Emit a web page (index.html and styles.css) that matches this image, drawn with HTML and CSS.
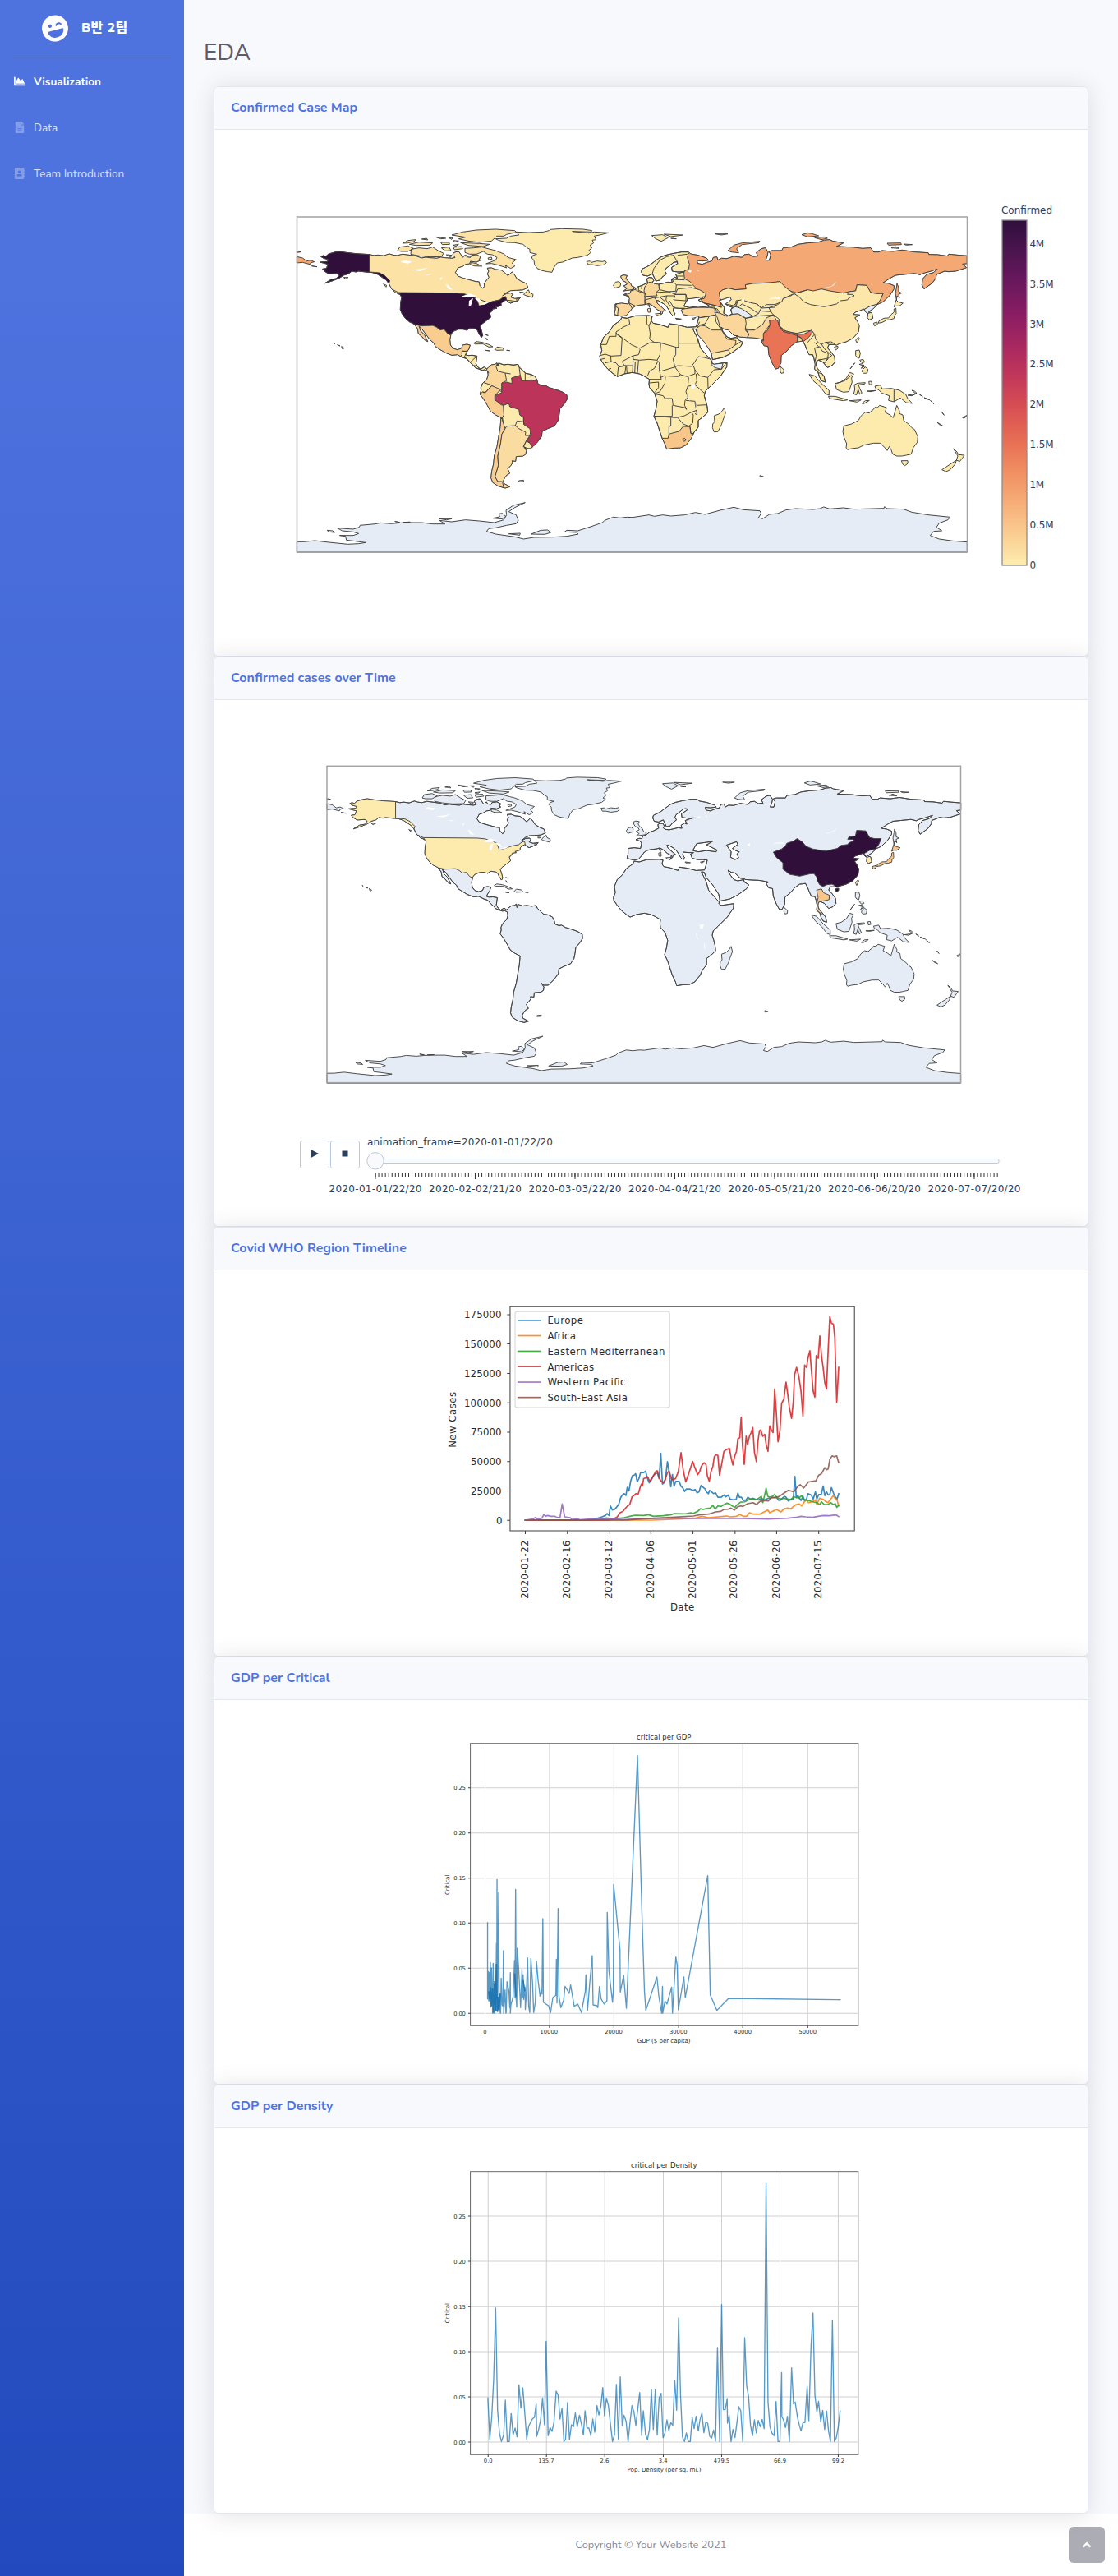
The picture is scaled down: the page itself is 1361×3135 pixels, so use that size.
FILE: index.html
```html
<!DOCTYPE html>
<html lang="ko">
<head>
<meta charset="utf-8">
<title>EDA</title>
<link rel="stylesheet" href="styles.css">
</head>
<body>
<div class="wrapper">
  <nav class="sidebar">
    <a class="brand">
      <svg class="brand-icon" viewBox="0 0 496 512"><path d="M248 8C111 8 0 119 0 256s111 248 248 248 248-111 248-248S385 8 248 8zm20.100 198.100c4-25.200 34.200-42.100 59.900-42.100s55.900 16.900 59.900 42.100c1.700 11.100-11.400 18.300-19.800 10.800l-9.500-8.500c-14.800-13.200-46.200-13.200-61 0L288 217c-8.400 7.400-21.600.3-19.900-10.900zM168 160c17.700 0 32 14.300 32 32s-14.300 32-32 32-32-14.300-32-32 14.300-32 32-32zm230.900 146C390 377 329.400 432 256 432h-16c-73.400 0-134-55-142.900-126-1.200-9.500 6.300-18 15.900-18h270c9.600 0 17.100 8.400 15.900 18z"/></svg>
      <span class="brand-text">B반 2팀</span>
    </a>
    <hr class="divider">
    <a class="nav-link active"><svg class="nav-icon" viewBox="0 0 512 512"><path d="M500 384c6.600 0 12 5.400 12 12v40c0 6.600-5.400 12-12 12H12c-6.600 0-12-5.400-12-12V76c0-6.600 5.400-12 12-12h40c6.600 0 12 5.400 12 12v308h436zM372.700 159.500L288 216l-85.300-113.700c-5.100-6.800-15.500-6.300-19.900 1L96 248v104h384l-89.900-187.800c-3.200-6.500-11.400-8.700-17.400-4.700z"/></svg><span>Visualization</span></a>
    <a class="nav-link"><svg class="nav-icon" viewBox="-64 0 512 512"><path d="M224 136V0H24C10.700 0 0 10.700 0 24v464c0 13.300 10.700 24 24 24h336c13.300 0 24-10.700 24-24V160H248c-13.200 0-24-10.800-24-24zm64 236c0 6.600-5.400 12-12 12H108c-6.600 0-12-5.400-12-12v-8c0-6.600 5.400-12 12-12h168c6.600 0 12 5.400 12 12v8zm0-64c0 6.600-5.400 12-12 12H108c-6.600 0-12-5.400-12-12v-8c0-6.600 5.400-12 12-12h168c6.600 0 12 5.400 12 12v8zm0-72v8c0 6.600-5.400 12-12 12H108c-6.600 0-12-5.400-12-12v-8c0-6.600 5.400-12 12-12h168c6.600 0 12 5.400 12 12zm96-114.100v6.100H256V0h6.100c6.400 0 12.500 2.500 17 7l97.900 98c4.500 4.500 7 10.600 7 16.900z"/></svg><span>Data</span></a>
    <a class="nav-link"><svg class="nav-icon" viewBox="-32 0 512 512"><path d="M436 160c6.600 0 12-5.400 12-12v-40c0-6.600-5.400-12-12-12h-20V48c0-26.500-21.500-48-48-48H48C21.500 0 0 21.500 0 48v416c0 26.500 21.500 48 48 48h320c26.500 0 48-21.500 48-48v-48h20c6.600 0 12-5.400 12-12v-40c0-6.600-5.400-12-12-12h-20v-64h20c6.600 0 12-5.400 12-12v-40c0-6.600-5.400-12-12-12h-20v-64h20zm-228-32c35.300 0 64 28.700 64 64s-28.700 64-64 64-64-28.700-64-64 28.700-64 64-64zm112 236.800c0 10.600-10 19.200-22.400 19.200H118.400C106 384 96 375.400 96 364.800v-19.200c0-31.800 30.100-57.600 67.200-57.600h5c12.300 5.100 25.700 8 39.800 8s27.600-2.900 39.800-8h5c37.100 0 67.200 25.800 67.200 57.600v19.200z"/></svg><span>Team Introduction</span></a>
  </nav>
  <div class="content">
    <main class="main">
      <h1>EDA</h1>
      <section class="card tall">
        <h6 class="card-header">Confirmed Case Map</h6>
        <svg class="chart plotly" viewBox="261 158 1063 640">
          <defs>
            <linearGradient id="matter" x1="0" y1="1" x2="0" y2="0">
              <stop offset="0" stop-color="rgb(253,237,176)"/><stop offset=".091" stop-color="rgb(250,205,145)"/><stop offset=".182" stop-color="rgb(246,173,119)"/><stop offset=".273" stop-color="rgb(240,142,98)"/><stop offset=".364" stop-color="rgb(231,109,84)"/><stop offset=".455" stop-color="rgb(216,80,83)"/><stop offset=".545" stop-color="rgb(195,56,90)"/><stop offset=".636" stop-color="rgb(168,40,96)"/><stop offset=".727" stop-color="rgb(138,29,99)"/><stop offset=".818" stop-color="rgb(107,24,93)"/><stop offset=".909" stop-color="rgb(76,21,80)"/><stop offset="1" stop-color="rgb(47,15,61)"/>
            </linearGradient>
            <!-- Americas mainland -->
            <path id="west" d="M122 187L130 183 140 186 150 177 165 173 175 170 190 168 215 172 250 176 299 179 315 183 330 181 352 184 362 180 372 177 385 181 400 183 420 178 450 182 470 185 490 192 505 189 520 191 545 193 560 189 575 191 600 193 612 190 603 180 607 173 615 170 625 168 632 178 640 190 650 180 655 188 668 190 672 182 690 180 705 187 700 197 705 200 690 207 668 204 665 213 650 215 640 222 622 228 613 245 622 258 640 265 665 272 688 278 700 279 702 292 712 303 720 296 718 285 728 272 736 262 730 250 735 240 730 229 745 228 760 234 780 236 790 243 805 257 820 243 830 255 838 268 855 278 872 285 878 300 860 308 835 310 815 311 800 318 785 330 800 322 815 320 822 325 815 335 830 340 850 338 840 347 815 357 805 352 798 345 788 350 780 358 780 366 760 372 765 376 750 378 745 388 738 392 743 408 730 418 710 433 703 441 708 455 713 475 708 482 700 470 693 455 685 450 665 448 655 456 640 452 625 452 605 460 597 470 593 490 595 510 605 522 620 527 635 522 640 510 655 507 667 510 662 525 655 535 650 545 660 548 675 547 692 550 690 565 688 578 695 590 705 598 718 590 728 597 735 590 745 582 758 580 765 575 768 588 771 575 778 578 790 582 805 580 825 583 842 580 846 590 858 602 870 613 890 617 905 625 912 640 915 652 930 658 940 656 955 665 985 674 1005 682 1020 692 1021 708 1010 725 995 742 992 765 988 785 975 805 950 815 930 825 928 843 912 865 897 880 888 888 870 888 862 880 872 895 870 908 860 915 835 917 833 934 820 932 822 940 815 950 804 962 812 978 800 985 793 995 788 1005 790 1015 812 1027 795 1032 770 1025 750 1012 743 995 746 970 752 945 755 915 765 880 770 850 777 810 780 775 760 765 742 752 730 730 715 705 703 690 707 675 706 665 712 650 728 635 733 618 730 605 720 600 712 602 700 598 685 592 680 585 668 575 655 560 640 555 620 545 600 547 575 537 555 525 540 515 535 503 520 490 505 470 490 450 480 440 486 458 500 472 512 497 502 492 490 478 478 468 475 450 462 433 445 425 430 412 418 395 412 380 413 355 417 335 410 325 395 318 380 305 370 285 360 272 345 262 330 252 310 245 285 243 260 240 250 243 235 240 222 250 205 255 190 265 165 275 137 284 160 270 178 267 190 255 180 248 150 250 135 240 128 232 142 230 148 215 130 210 118 207 145 205 150 198 132 193Z"/>
            <!-- Eurasia and Africa, with the Black and Caspian seas cut out -->
            <path id="east" d="M-63 360L-40 357-15 360-11 340-16 332-33 326-20 321-10 322-6 312 5 309 20 297 35 292 45 287 55 282 52 268 60 263 72 264 78 275 72 280 80 286 95 288 110 285 130 280 145 282 142 270 155 262 164 266 158 252 175 246 190 242 165 243 145 240 143 226 165 212 162 206 150 208 138 218 122 230 118 240 124 250 108 262 100 273 85 276 80 265 73 250 55 258 38 255 32 242 35 232 60 220 80 205 100 190 120 182 150 175 180 170 205 170 212 177 240 182 270 192 278 200 255 203 235 201 238 212 255 215 272 208 290 203 295 190 308 188 312 200 325 193 345 194 370 186 400 190 408 180 425 178 440 187 458 185 452 172 470 158 485 155 495 170 492 185 486 200 500 200 505 180 498 168 510 165 545 165 550 155 580 152 605 142 640 137 680 134 700 127 720 125 730 130 770 137 745 150 800 152 840 157 870 155 880 170 900 170 910 165 950 168 985 163 1030 170 1080 173 1082 179 1115 180 1150 185 1155 178 1185 181 1222 184 1222 212 1205 214 1220 227 1180 240 1155 242 1140 240 1110 252 1108 265 1095 283 1065 305 1057 290 1060 268 1075 252 1100 245 1113 232 1090 240 1060 248 1050 253 1030 248 990 252 960 255 940 266 915 282 935 285 955 293 955 305 940 328 915 352 893 362 885 372 878 378 862 388 874 393 878 412 865 418 858 410 860 395 850 388 845 378 828 385 813 390 806 398 830 400 812 410 822 425 828 440 825 462 805 485 780 498 755 505 745 510 735 508 718 508 712 520 725 535 738 552 740 572 728 585 712 592 695 572 680 565 672 568 670 582 675 595 690 612 700 625 704 645 690 640 682 625 678 610 665 598 667 580 663 560 658 545 645 545 638 530 630 510 622 495 610 497 600 498 580 512 565 530 543 548 542 575 532 595 522 597 510 575 498 545 495 515 480 512 470 495 480 490 455 485 440 483 415 482 390 480 383 476 370 475 350 455 335 452 323 444 330 460 345 480 360 485 378 482 382 474 386 490 403 500 395 515 360 540 330 555 292 563 287 537 263 500 239 473 231 452 220 450 239 489 248 521 276 553 290 568 287 572 297 580 345 573 344 590 320 625 285 660 266 678 262 695 268 715 273 735 275 755 260 770 240 785 240 810 225 828 215 850 195 875 175 885 150 886 125 890 120 875 108 850 98 820 90 795 78 770 85 745 90 715 80 685 62 665 60 650 62 635 40 622 25 615 0 610-30 615-55 625-70 615-90 598-105 580-118 560-120 550-112 530-116 508-105 480-85 462-70 438-45 420-39 409-20 412 10 403 60 402 72 405 68 420 75 430 100 435 130 445 135 432 165 436 200 445 232 443 238 425 243 405 225 403 205 403 185 398 178 382 190 376 170 376 150 374 148 385 155 395 150 405 140 395 132 380 125 370 115 360 95 348 87 347 90 357 110 375 122 385 112 384 108 396 101 398 105 388 90 380 72 365 60 358 45 362 25 364 10 368 0 374-8 385-22 401-40 405-60 400-67 398-63 380ZM187 368L202 341 220 339 263 333 240 346 280 366 277 373 240 368 208 373ZM317 347L356 334 361 344 340 360 352 368 366 373 358 381 364 396 350 403 333 394 335 373Z"/>
            <clipPath id="westClip"><use href="#west"/></clipPath>
            <clipPath id="eastClip"><use href="#east"/></clipPath>
            <path id="antarctica" d="M34 1228L60 1228 100 1224 150 1230 220 1237 260 1235 285 1231 240 1225 215 1222 212 1208 190 1205 240 1205 260 1198 240 1192 200 1188 182 1178 240 1182 262 1175 265 1168 320 1163 340 1159 380 1162 410 1159 450 1158 490 1158 530 1163 575 1163 555 1150 600 1155 650 1148 700 1152 755 1158 790 1148 800 1130 798 1113 825 1095 868 1085 830 1103 808 1118 835 1130 843 1150 835 1162 800 1168 760 1177 735 1180 727 1190 760 1200 830 1210 862 1218 900 1212 970 1211 1020 1208 1062 1200 1055 1194 1012 1192 1020 1186 1060 1188 1110 1172 1150 1158 1158 1150 1190 1138 1215 1141 1240 1138 1260 1139 1320 1130 1340 1135 1370 1130 1400 1134 1450 1130 1490 1121 1525 1128 1580 1113 1630 1102 1665 1111 1725 1115 1730 1125 1720 1140 1735 1144 1760 1128 1790 1125 1820 1112 1855 1107 1920 1110 1945 1107 1958 1101 1980 1108 2030 1104 2070 1109 2178 1106 2180 1100 2190 1107 2250 1109 2280 1120 2340 1130 2420 1138 2412 1148 2380 1160 2370 1175 2390 1188 2360 1190 2347 1205 2380 1218 2430 1225 2482 1229 2482 1266 34 1266ZM750 1142L775 1137 772 1126 785 1124 797 1135 785 1145ZM890 1200L925 1186 950 1185 962 1194 940 1201ZM808 1199L850 1197 848 1204ZM145 1186L165 1188 172 1194 150 1192ZM555 1144L600 1144 580 1148ZM392 1154L410 1157ZM422 1157L448 1156Z"/>
            <path id="arctic" d="M600 108L640 97 690 90 760 87 830 92 836 98 800 106 790 112 765 112 745 130 700 135 660 130 625 122 650 116ZM632 136L700 139 738 142 715 150 660 146ZM648 157L680 155 710 152 740 160 760 165 790 177 805 190 835 198 820 210 830 222 815 230 795 218 800 228 770 218 745 212 725 213 760 200 765 190 748 180 730 178 715 168 690 178 665 178 648 172ZM452 160L480 155 510 158 530 152 550 165 570 175 562 187 520 188 480 184 450 178ZM402 165L410 152 440 148 460 157 440 168 415 168ZM422 138L440 128 468 125 462 132 440 137ZM445 142L480 134 530 137 520 145 470 146ZM490 123L508 120 512 126ZM540 115L578 120 560 122ZM560 135L590 135 592 142 565 143ZM562 155L590 152 597 165 575 166ZM588 118L603 118 600 124ZM605 128L625 130 610 134ZM605 153L635 150 640 158 610 162ZM580 180L600 182 595 190ZM605 145L625 142 615 149ZM670 208L690 212 710 222 682 221 668 216ZM732 192L745 189 747 196 735 198ZM865 322L880 308 884 318 897 325 895 336 870 329 862 325ZM848 316L862 318 850 320ZM385 308L405 318 412 325 392 317ZM350 287L362 292 360 298ZM840 352L848 338 836 342Z"/>
            <path id="greenland" d="M760 122L800 120 815 112 845 108 835 97 880 99 935 97 955 92 960 88 1000 85 1080 87 1112 92 1108 97 1040 95 1100 101 1120 97 1172 100 1140 108 1120 112 1127 125 1113 127 1118 137 1105 145 1112 155 1100 165 1110 170 1095 182 1060 190 1040 192 1005 207 985 210 972 228 966 244 950 242 930 238 912 230 902 215 900 200 892 192 895 183 910 178 885 172 885 160 875 155 860 142 830 136 800 135 770 127Z"/>
            <path id="caribbean" d="M680 503L690 497 712 500 735 508 750 516 735 517 715 506 685 506ZM757 526L765 517 785 520 792 528 765 529ZM724 529L738 531ZM800 529L812 530ZM724 472L733 475ZM725 484L730 492ZM170 503L174 505ZM182 509L192 513ZM197 515L207 521 201 525ZM845 1005L862 1003 862 1008 845 1009ZM1092 205L1105 203 1110 208 1130 203 1150 205 1160 202 1165 209 1155 217 1130 220 1112 216 1098 216ZM205 263L222 263 212 268ZM88 221L108 224Z"/>
            <path id="chukotka" d="M34 187L55 192 70 203 85 200 98 206 85 209 82 215 55 208 34 210ZM34 167L48 170 34 172Z"/>
            <path id="ruIsles" d="M348 165L370 145 400 137 465 131 462 136 400 143 380 158 388 173 360 170ZM618 107L640 100 655 103 680 111 640 115ZM665 118L700 115 712 120 690 125ZM930 138L980 137 982 143 935 145ZM990 141L1022 143 1000 145ZM945 155L960 150 975 157ZM302 104L348 104 325 108ZM966 285L972 300 972 315 983 320 972 325 975 338 966 330 964 345 960 320 964 300Z"/>
            <path id="isles" d="M70 110L110 107 130 118 105 131 85 122ZM115 105L185 108 140 114ZM140 120L160 122ZM-43 258L-33 254-20 256-24 266-18 275-8 283-3 295 8 299 3 307-32 312-20 303-32 294-20 288-24 280-35 275-40 268ZM-70 292L-62 280-50 278-43 284-45 296-64 302ZM55 378L64 375 65 390 57 390ZM56 362L62 362 62 372ZM83 396L103 394 100 404 88 400ZM157 412L178 415 160 416ZM216 413L232 409 222 417ZM335 738L340 758 330 785 325 800 312 826 298 827 292 812 293 798 300 790 298 768 315 762 328 750ZM540 588L553 600 552 611 543 613 539 605ZM465 986L478 990 466 992ZM737 517L750 514 750 522 742 528ZM815 530L828 528 832 540 828 558 820 555 815 548ZM840 600L850 590 860 598 857 612 845 613 838 607ZM830 565L842 562 848 572 838 575ZM828 580L840 578 848 588 835 595 842 585ZM795 597L812 575ZM740 650L760 645 780 632 793 610 808 615 800 630 802 645 790 680 770 682 745 672ZM645 617L665 622 690 650 718 675 718 693 705 688 685 662 660 640ZM715 697L740 697 785 710 770 713 720 705ZM792 713L835 710 820 718ZM838 723L850 713 865 712 845 724ZM810 655L822 649 850 647 848 652 825 655 830 668 838 685 830 690 824 672 818 692 808 688 812 672ZM863 643L872 642 875 653 865 655ZM855 678L888 676 870 680ZM885 660L905 656 912 670 945 668 975 675 998 690 1005 705 1022 723 1000 720 978 703 955 717 935 712 938 695 910 685 900 674 888 668ZM1005 693L1025 690 1038 685 1030 678 1020 675 1035 688 1020 695ZM1048 690L1060 698ZM1065 702L1085 710ZM1088 712L1100 725ZM1130 755L1138 766ZM1113 792L1133 805 1120 800ZM1205 775L1222 766 1212 778ZM965 730L975 750 975 760 987 765 990 785 1010 800 1020 812 1030 818 1042 845 1040 865 1025 885 1018 908 1000 912 985 915 965 915 950 908 945 893 938 880 930 895 922 885 905 868 880 868 845 875 825 885 800 888 785 892 780 885 782 870 772 845 768 825 772 805 800 798 825 785 835 768 850 755 865 758 870 752 880 745 885 737 895 738 902 730 928 738 922 755 940 765 952 775 958 755ZM982 932L1005 932 1006 942 995 950 987 945ZM1172 888L1185 900 1190 910 1212 912 1205 922 1195 935 1183 930 1188 915ZM1183 930L1178 945 1160 965 1145 972 1130 965 1145 955 1165 942Z"/>
            <path id="japan" d="M955 371L963 345 970 352 988 357 975 367 962 367ZM900 422L918 412 935 411 945 398 955 390 955 378 962 375 963 395 957 402 955 413 942 417 930 418 912 427 898 430ZM880 430L893 426 895 434 884 440Z"/>
            <path id="taiwan" d="M815 492L825 481 828 485 820 503Z"/>
            <path id="usa" d="M380 318L615 320 645 323 668 330 690 340 700 367 735 355 750 350 775 345 787 335 797 333 800 345 840 400 740 500 700 500 690 470 640 480 598 475 585 468 572 452 557 455 545 445 530 438 490 440 465 435 400 440ZM60 150L299 150 299 243 335 246 355 256 374 275 370 285 330 262 200 300 60 300Z"/>
            <path id="china" d="M498 374L515 368 530 362 545 350 550 340 575 332 590 322 610 335 625 352 650 362 700 370 745 360 760 348 785 345 790 338 810 330 805 325 785 325 790 315 815 312 820 290 855 292 870 318 890 322 915 322 905 345 893 362 868 368 848 380 860 395 860 520 740 520 735 503 725 498 705 500 690 507 677 500 668 485 665 470 655 457 640 458 600 467 560 460 545 447 535 440 535 415 510 395Z"/>
            <path id="thailand" d="M665 521L684 516 692 531 715 541 713 558 689 563 680 563 673 579 675 595 692 610 684 613 660 595 671 550Z"/>
            <path id="skorea" d="M855 396L874 390 884 400 884 422 855 422Z"/>
            <g id="lakes" fill="#fff">
              <path d="M412 207L425 200 455 205 440 212ZM455 235L490 232 515 226 485 240ZM500 253L530 250 515 254ZM555 268L568 260 560 272ZM575 286L585 295 582 285 603 308 588 305ZM635 332L665 322 690 330 675 335 650 336ZM662 367L663 348 678 338 670 365ZM683 338L700 340 713 355 698 352ZM697 364L720 355 740 352 720 362ZM783 758L790 768 784 762Z"/>
              <path d="M1460 240L1478 235 1472 245ZM1492 230L1504 238 1500 240ZM1963 300Q1995 298 2003 276Q2003 296 1963 303ZM1655 345L1668 340 1668 352ZM1758 345L1765 338 1798 336 1798 341 1768 341ZM1473 655L1490 652 1485 670 1475 668ZM1458 685L1470 713 1462 708ZM1490 720L1496 750 1491 745ZM1340 253L1352 250 1350 256Z"/>
            </g>
          </defs>
          <g class="map" transform="translate(350 250) scale(.33333)">
            <use href="#antarctica" class="void"/>
            <use href="#west" class="low"/>
            <g clip-path="url(#westClip)">
              <path class="c2" d="M299 150H900V360L797 345 797 333 775 345 735 355 690 340 615 320H380L299 250Z"/>
              <path class="c5" d="M400 435L690 440 700 500 668 520 655 533 637 532 637 545 628 555 500 560Z"/>
              <use href="#usa" class="top"/>
              <path class="c4" d="M730 560L770 562 762 590 768 605 795 612 800 640 783 648 783 680 770 675 750 660 742 655 720 648 700 640 735 610 728 602Z"/>
              <path class="c5" d="M700 690L712 682 722 684 745 658 778 672 757 695 760 710 780 728 788 730 790 765 783 778 740 790 690 720ZM740 780L783 776 788 795 795 815 783 835 778 870 768 915 770 950 758 990 768 1008 790 1010 795 1040 720 1035Z"/>
              <path class="c3" d="M795 815L800 806 832 804 845 815 870 828 868 840 885 840 872 860 862 880 900 900 900 1040 791 1040 785 1008 768 1008 758 990 770 950 768 915 778 870 783 835Z"/>
              <path class="brazil" d="M783 648L800 645 820 650 818 630 850 620 855 640 870 640 890 637 905 640 912 620 1060 650 1060 800 900 890 885 868 872 860 890 838 885 815 863 800 862 775 848 765 845 745 812 735 808 722 790 730 775 722 757 710 757 695 782 684Z"/>
              <path class="edge" d="M788 795L785 775M862 775V790L838 787 832 804M864 800L862 790M885 840L888 825M868 608L868 640M888 612L890 637M846 590L850 622M795 612L815 615M712 680L722 683 745 660M637 532H655M650 545L645 555 655 560M668 572L690 552M680 585H690M703 600V592M862 880L872 860 885 865"/>
            </g>
            <use href="#west" class="edge"/>
            <use href="#arctic" class="c2"/><use href="#greenland" class="low"/><use href="#caribbean" class="low"/><use href="#chukotka" class="russia"/>
            <g transform="translate(1260 0)">
              <use href="#east" class="low"/>
              <g clip-path="url(#eastClip)">
                <path class="russia" d="M203 178L212 168 240 100H1222V330L940 400 893 362 905 345 915 322 890 322 870 318 855 292 820 290 815 312 790 315 770 320 720 312 690 305 660 312 640 308 600 320 575 312 560 300 545 290 538 278 510 283 490 283 440 285 412 290 415 305 375 308 350 302 330 308 316 318 330 330 320 345 325 372 300 365 265 357 250 345 268 322 240 310 220 290 210 278 190 268 188 250 188 240 205 232 208 215 200 190Z"/>
                <use href="#china" class="c1"/>
                <path class="c1" d="M316 318L330 308 350 302 375 308 415 305 412 290 440 285 490 283 538 278 560 300 590 322 550 340 545 352 520 362 490 362 470 375 455 360 430 355 400 345 378 348 378 368 340 360 320 340Z"/>
                <path class="c1" d="M155 325L165 305 215 300 245 308 268 322 262 340 200 345 195 325Z"/>
                <path class="india" d="M465 492L478 488 475 468 490 460 502 438 500 420 512 415 530 420 535 438 550 455 600 470 625 470 655 455 657 465 640 485 622 498 612 480 602 478 606 508 543 610 510 610 470 520Z"/>
                <path class="c4" d="M602 478L618 485 622 508 602 508ZM415 490L425 470 412 455 445 455 475 435 490 410 515 400 525 418 500 420 502 435 478 468 478 495ZM300 390L318 393 345 405 362 398 385 395 412 412 415 430 412 450 425 470 415 495 370 480 320 445 310 410ZM235 448L248 438 265 440 290 455 325 455 345 488 378 493 375 510 350 528 290 540 240 500ZM170 380L225 373 300 372 302 400 245 410 170 410ZM45 297L60 280 95 285 98 308 85 318 90 330 50 332 42 312ZM-40 318L5 305 25 315 45 322 45 362 0 378-12 358-14 330ZM-52 355H-15L12 368-20 412-55 405-52 375-64 368ZM45 345L80 336 88 348 130 385 105 405 70 368 48 364Z"/>
                <path class="void" d="M360 378L375 370 385 372 400 378 440 405 415 412 385 395 362 398ZM848 378L868 368 895 360 885 378 860 394 848 390ZM285 578L295 578 330 576 325 598 300 592Z"/>
                <path class="c6" d="M90 850H130L133 835 150 830 170 825 185 807 210 808 213 832 250 835 200 900H100ZM182 855L190 850 196 856 188 862Z"/>
                <use href="#thailand" class="low"/><use href="#skorea" class="low"/>
                <path class="edge" d="M-13 415L-10 433-35 445-60 462V478H-85L-95 508H-118M-60 468L-38 485-42 548-80 550-100 543-118 548M-60 466L-5 508 25 522 62 502 80 500 62 488 65 470 60 440 52 432 52 405M60 440L68 422M80 500L95 500 160 518H168V438M168 503H250M158 518V545L148 560 155 590 165 585 215 588 225 575 240 552 262 555 280 560M28 525L22 545 2 549 3 562 25 565 60 562 90 565 100 545 103 500M90 565L98 575 98 600 105 605 155 590 175 618 200 625 228 615 228 600 222 585M22 565L18 612M92 570L80 595 62 605 55 622M98 600L105 635H60M100 630L115 622 165 625 175 618M228 600L245 622 275 628 298 600 325 598 342 575M275 628L276 668M232 615L235 640 228 655 262 685M205 628L202 660 228 657M120 625L118 650 100 680 80 688 112 695 118 705 145 705 148 730 190 738 198 745 190 730 192 712 202 700 195 680 202 660M145 730V770H80L160 775 190 768 215 755 235 748 228 715 195 712M235 730L272 728M228 720L236 765 228 760M165 775L185 798 205 806 220 795 222 765 215 755M140 775V805L133 808V835M62 648L95 645 95 665 82 682M210 808L213 832 222 838M-38 570L-20 560 2 549M-38 570L-30 585H2M-28 615L-24 585-48 590-60 575-80 570M-22 585L-20 612M-55 622L-52 590M2 565L0 612M8 612L10 570M-100 558L-115 562M-80 548L-78 570-100 575M-78 595L-88 598"/>
                <path class="edge" d="M98 288L100 308 130 315 158 313 160 290 150 280 145 270 190 272M160 258H188M160 290L215 292M155 325L195 325 195 350M85 318L130 315 158 325M80 338L125 330 155 330 150 345 195 348M125 330L122 345 135 365 155 372M100 335L118 350M135 348L150 372M72 250L78 230 100 200 125 187 150 182 165 208M165 182L200 178M22 295L22 310 42 318M35 290L32 305M45 330L50 345M245 410L280 405 302 400 305 425 325 455M245 437L265 432 280 405M235 448L245 425M345 488L378 478M375 510L395 498M350 528L358 542M265 357L300 365 325 372M280 372L310 378 318 393M300 372L310 390M360 378L385 348 378 368M385 372L400 360 430 375 460 395 440 405 485 402 515 400M412 412L440 408M455 360L470 375 460 395M470 375L520 372M460 385L505 388M412 450L445 455M535 440L550 460 600 475M600 467L602 478M590 322L640 308M665 500L680 516M690 507L705 528 728 548 712 560 700 578M665 470L640 500M700 575L715 560M705 500L718 508"/>
              </g>
              <use href="#east" class="edge"/>
              <use href="#isles" class="low"/><use href="#japan" class="low"/><use href="#taiwan" class="low"/><use href="#ruIsles" class="russia"/>
              <path class="edge" d="M955 672V717M745 650L775 640 800 620"/>
              <path class="c4" d="M-43 258L-33 254-20 256-24 266-18 275-8 283-3 295 8 299 3 307-32 312-20 303-32 294-20 288-24 280-35 275-40 268Z"/>
            </g>
            <use href="#lakes"/>
          </g>
          <rect x="361.500" y="264" width="816" height="408" fill="none" stroke="#a3a3a3" stroke-width="1.500"/>
          <rect x="1220" y="268" width="30" height="420" fill="url(#matter)" stroke="#918d8d" stroke-width="1.300"/>
          <g class="ptext">
            <text x="1219" y="260" textLength="62">Confirmed</text>
            <text x="1253.500" y="301" textLength="17.500">4M</text><text x="1253.500" y="350" textLength="29">3.5M</text><text x="1253.500" y="399" textLength="17.500">3M</text><text x="1253.500" y="447" textLength="29">2.5M</text><text x="1253.500" y="496" textLength="17.500">2M</text><text x="1253.500" y="545" textLength="29">1.5M</text><text x="1253.500" y="594" textLength="17.500">1M</text><text x="1253.500" y="643" textLength="29">0.5M</text><text x="1253.500" y="692">0</text>
          </g>
        </svg>
      </section>
      <section class="card tall">
        <h6 class="card-header">Confirmed cases over Time</h6>
        <svg class="chart plotly" viewBox="261 852 1063 640">
          <g class="map" transform="translate(387.300 919.100) scale(.3152)">
            <use href="#antarctica" class="void"/><use href="#west" class="void"/>
            <g clip-path="url(#westClip)"><use href="#usa" class="low"/></g>
            <use href="#west" class="edge"/><use href="#arctic" class="void"/><use href="#greenland" class="void"/><use href="#caribbean" class="void"/><use href="#chukotka" class="void"/>
            <g transform="translate(1260 0)">
              <use href="#east" class="void"/>
              <g clip-path="url(#eastClip)"><use href="#china" class="top"/><use href="#thailand" class="c6"/><use href="#skorea" class="low"/></g>
              <use href="#east" class="edge"/><use href="#isles" class="void"/><use href="#ruIsles" class="void"/><use href="#japan" class="c6"/><use href="#taiwan" class="low"/>
              <path class="top" d="M737 517L750 514 750 522 742 528Z"/>
            </g>
            <use href="#lakes"/>
          </g>
          <rect x="398" y="932.300" width="771.500" height="385.300" fill="none" stroke="#a3a3a3" stroke-width="1.500"/>
          <g fill="#fff" stroke="#bec8d9"><rect x="365.500" y="1388.500" width="35" height="33" rx="2"/><rect x="402.500" y="1388.500" width="35" height="33" rx="2"/></g>
          <path fill="#2a3f5f" d="M378.500 1399V1409L388 1404ZM416.500 1400.500H423.500V1407.500H416.500Z"/>
          <rect x="457" y="1410.500" width="759" height="5" rx="1.500" fill="#f8fafc" stroke="#bec8d9"/>
          <circle cx="457" cy="1412.800" r="10.200" fill="#f8fafc" stroke="#bec8d9"/>
          <path d="M456.500 1430H1215" stroke="#333" stroke-width="4" stroke-dasharray="1 3.049"/>
          <path d="M457 1428V1435M578.500 1428V1435M700 1428V1435M821.500 1428V1435M943 1428V1435M1064.500 1428V1435M1186 1428V1435" stroke="#333"/>
          <g class="ptext">
            <text x="447" y="1394" textLength="226">animation_frame=2020-01-01/22/20</text>
            <g text-anchor="middle"><text x="457" y="1451" textLength="113">2020-01-01/22/20</text><text x="578.500" y="1451" textLength="113">2020-02-02/21/20</text><text x="700" y="1451" textLength="113">2020-03-03/22/20</text><text x="821.500" y="1451" textLength="113">2020-04-04/21/20</text><text x="943" y="1451" textLength="113">2020-05-05/21/20</text><text x="1064.500" y="1451" textLength="113">2020-06-06/20/20</text><text x="1186" y="1451" textLength="113">2020-07-07/20/20</text></g>
          </g>
        </svg>
      </section>
      <section class="card c-time">
        <h6 class="card-header">Covid WHO Region Timeline</h6>
        <svg class="chart" viewBox="261 1546 1063 470">
          <g class="mpl" transform="translate(530 1570) scale(.33801 .33333)" font-size="35">
            <g class="series">
              <path stroke="#1f77b4" d="M323 842H560L580 836 600 830 612 825 618 818 625 825 630 790 637 805 645 803 652 795 660 785 667 760 673 750 680 745 686 752 691 722 697 735 703 700 709 680 715 678 721 672 727 702 733 690 739 668 750 668 757 663 764 690 770 705 778 695 785 680 792 672 800 670 806 690 812 597 818 710 825 705 830 680 836 628 842 665 848 720 854 675 860 718 866 700 878 700 885 718 892 725 898 737 904 728 916 728 928 733 936 730 943 742 950 738 957 715 965 722 972 728 978 740 984 745 988 733 995 738 1002 745 1010 742 1018 758 1030 758 1040 750 1046 757 1055 750 1062 765 1072 768 1084 766 1090 743 1096 758 1103 758 1110 770 1120 768 1126 758 1135 765 1145 762 1155 766 1165 768 1175 762 1185 768 1200 762 1215 760 1228 758 1238 770 1245 768 1258 755 1264 758 1272 772 1282 765 1290 765 1296 682 1301 760 1306 752 1318 770 1325 755 1331 770 1338 765 1343 745 1355 750 1362 765 1370 738 1375 765 1382 748 1391 748 1398 717 1404 752 1410 738 1416 750 1422 748 1428 723 1436 745 1442 758 1448 765 1454 745"/>
              <path stroke="#ff7f0e" d="M323 842H780L870 838 940 834 960 828 985 833 1040 828 1050 827 1062 830 1085 828 1097 822 1110 828 1122 828 1132 815 1145 820 1170 820 1185 812 1198 805 1205 815 1215 810 1230 803 1245 812 1258 800 1270 798 1282 800 1290 793 1300 785 1312 783 1320 790 1330 775 1338 768 1345 778 1358 775 1370 768 1375 785 1385 762 1398 766 1405 772 1415 778 1425 765 1435 752 1442 765 1448 768 1454 790"/>
              <path stroke="#2ca02c" d="M323 842H520L600 839 615 834 640 838 680 833 700 828 720 824 750 825 768 822 785 828 820 826 850 822 860 818 890 819 905 818 920 815 930 817 945 810 955 800 965 803 975 800 990 798 1000 788 1008 802 1018 790 1030 792 1040 785 1050 780 1060 783 1070 790 1080 795 1088 785 1100 776 1115 775 1130 767 1142 765 1155 768 1165 762 1175 755 1180 778 1187 750 1192 725 1198 755 1205 758 1215 755 1222 748 1230 757 1242 765 1255 762 1270 765 1282 768 1290 757 1300 758 1310 762 1320 752 1328 768 1345 770 1360 775 1375 778 1385 785 1392 775 1402 785 1415 785 1425 778 1435 785 1442 782 1447 795 1454 788"/>
              <path stroke="#d62728" d="M323 842H620L640 838 655 830 665 815 675 810 683 800 692 790 700 785 708 757 715 752 722 745 730 748 738 720 742 710 746 715 750 690 765 684 772 700 785 680 795 662 800 662 805 685 812 698 820 705 828 695 835 670 842 662 850 690 855 695 865 690 875 665 885 595 893 660 902 702 910 680 918 655 927 627 935 650 945 676 952 665 958 645 968 632 975 638 980 680 987 700 993 665 1000 645 1005 610 1012 602 1018 605 1024 678 1032 635 1040 590 1050 583 1060 580 1066 615 1072 640 1078 610 1085 590 1090 545 1097 540 1102 466 1107 570 1113 638 1120 535 1125 565 1132 535 1138 522 1144 503 1150 595 1157 628 1163 550 1168 515 1173 512 1180 535 1187 528 1193 570 1199 590 1205 497 1211 512 1217 522 1223 362 1229 450 1235 555 1242 515 1248 415 1256 400 1264 337 1270 380 1276 430 1284 470 1290 410 1295 310 1302 283 1310 315 1318 370 1325 462 1331 275 1338 283 1344 245 1350 222 1356 300 1362 370 1368 392 1373 240 1380 250 1386 168 1392 240 1398 285 1404 340 1410 362 1416 220 1422 97 1428 122 1435 125 1440 175 1447 410 1454 283"/>
              <path stroke="#9467bd" d="M323 842L350 838 360 832 365 838 383 835 390 821 397 828 403 825 415 828 430 828 437 832 448 834 456 783 465 830 485 833 492 840 510 836 520 841 560 838 620 838 690 840 750 836 830 834 900 836 1000 836 1100 836 1200 838 1270 835 1300 832 1318 828 1335 830 1360 832 1380 828 1400 825 1420 826 1445 823 1454 829"/>
              <path stroke="#8c564b" d="M323 842H680L740 838 800 835 850 832 900 829 930 827 955 822 985 820 1010 812 1028 810 1040 803 1055 802 1065 798 1078 805 1090 793 1100 790 1108 792 1125 782 1145 778 1157 785 1170 773 1185 770 1200 772 1212 758 1225 760 1240 755 1258 742 1272 733 1292 738 1305 720 1315 712 1328 724 1345 702 1372 698 1382 677 1392 672 1404 650 1410 658 1416 655 1422 620 1430 607 1437 610 1447 607 1454 632"/>
            </g>
            <rect class="spine" x="268" y="61" width="1243" height="820"/>
            <path class="tick" d="M257 90H268M257 197H268M257 305H268M257 413H268M257 520H268M257 628H268M257 735H268M257 843H268M323 881V893M475 881V893M628 881V893M776 881V893M928 881V893M1080 881V893M1230 881V893M1382 881V893"/>
            <g text-anchor="end"><text x="237" y="102" textLength="135">175000</text><text x="237" y="210" textLength="135">150000</text><text x="237" y="318" textLength="135">125000</text><text x="237" y="426" textLength="135">100000</text><text x="237" y="533" textLength="111">75000</text><text x="237" y="641" textLength="111">50000</text><text x="237" y="748" textLength="111">25000</text><text x="240" y="856">0</text></g>
            <g><text transform="translate(332 1130) rotate(-90)" textLength="214">2020-01-22</text><text transform="translate(485 1130) rotate(-90)" textLength="214">2020-02-16</text><text transform="translate(636 1130) rotate(-90)" textLength="214">2020-03-12</text><text transform="translate(788 1130) rotate(-90)" textLength="214">2020-04-06</text><text transform="translate(939 1130) rotate(-90)" textLength="214">2020-05-01</text><text transform="translate(1087 1130) rotate(-90)" textLength="214">2020-05-26</text><text transform="translate(1240 1130) rotate(-90)" textLength="214">2020-06-20</text><text transform="translate(1392 1130) rotate(-90)" textLength="214">2020-07-15</text></g>
            <text x="846" y="1172" textLength="87">Date</text><text transform="translate(72 577) rotate(-90)" textLength="204">New Cases</text>
            <rect x="286" y="79" width="558" height="351" rx="8" fill="#fff" fill-opacity=".8" stroke="#d6d6d6" stroke-width="3"/>
            <g class="series"><path stroke="#1f77b4" d="M297 111H377"/><path stroke="#ff7f0e" d="M297 167H377"/><path stroke="#2ca02c" d="M297 224H377"/><path stroke="#d62728" d="M297 280H377"/><path stroke="#9467bd" d="M297 337H377"/><path stroke="#8c564b" d="M297 393H377"/></g>
            <text x="403" y="124" textLength="129">Europe</text><text x="403" y="181" textLength="102">Africa</text><text x="403" y="237" textLength="424">Eastern Mediterranean</text><text x="403" y="294" textLength="168">Americas</text><text x="403" y="350" textLength="282">Western Pacific</text><text x="403" y="407" textLength="289">South-East Asia</text>
          </g>
        </svg>
      </section>
      <section class="card c-gdp">
        <h6 class="card-header">GDP per Critical</h6>
        <svg class="chart" viewBox="261 2069 1063 467">
          <g class="mpl small" transform="translate(530 2090) scale(.33801 .33333)" font-size="20">
            <path class="grid" d="M179 95V1126M411 95V1126M643 95V1126M876 95V1126M1107 95V1126M1341 95V1126M126 257H1523M126 422H1523M126 587H1523M126 751H1523M126 916H1523M126 1081H1523"/>
            <path class="line" d="M188 748V1028L191 928 192 1035 195 932 196 1037 198 895 200 1058 202 915 204 1022 206 980 206 1080 208 898 210 1080 212 965 213 1080 216 970 217 1070 220 825 221 1070 222 592 224 1074 228 638 230 1080 233 1008 235 1080 237 952 240 1050 243 1055 245 852 246 1080 251 995 254 1080 255 1078 258 965 265 1000 268 1060 270 932 270 1080 272 1050 280 1020 285 888 287 1025 289 628 291 1028 293 1058 295 843 300 920 307 1060 312 920 314 1022 316 940 318 1030 323 985 324 1067 328 1000 332 878 336 1055 340 1078 344 880 350 970 354 1078 360 1040 364 890 370 960 377 1018 382 995 384 1010 387 735 389 1040 408 1054 415 1078 423 1023 434 1015 436 883 438 1043 442 698 445 1018 452 1060 462 1033 467 982 482 1008 487 977 500 1055 513 1047 526 1078 540 1000 542 940 548 1070 556 970 565 870 568 1050 582 1053 585 1060 591 982 597 1028 608 1047 618 1035 619 712 625 925 638 1040 641 1000 642 610 665 850 666 1003 678 942 688 1062 728 140 745 750 753 1000 758 1070 798 948 805 1020 815 1080 818 982 819 1080 827 1035 834 1047 851 985 854 1080 866 875 871 905 875 1068 895 948 900 1023 981 578 990 1013 1014 1070 1056 1026 1460 1031"/>
            <path class="dense" d="M192 1000L196 1030 199 985 202 1055 206 990 209 1078 213 975 216 1072 220 900 223 1075 226 1020 229 1070 234 1010M286 935L290 1020M316 960L322 1000"/>
            <rect class="spine" x="126" y="95" width="1397" height="1031"/>
            <path class="tick" d="M118 257H126M118 422H126M118 587H126M118 751H126M118 916H126M118 1081H126M179 1126V1134M411 1126V1134M643 1126V1134M876 1126V1134M1107 1126V1134M1341 1126V1134"/>
            <g><text x="66" y="265" textLength="43">0.25</text><text x="66" y="430" textLength="43">0.20</text><text x="66" y="595" textLength="43">0.15</text><text x="66" y="759" textLength="43">0.10</text><text x="66" y="924" textLength="43">0.05</text><text x="66" y="1088" textLength="43">0.00</text></g>
            <g text-anchor="middle"><text x="179" y="1156">0</text><text x="409" y="1156" textLength="64">10000</text><text x="642" y="1156" textLength="64">20000</text><text x="875" y="1156" textLength="64">30000</text><text x="1107" y="1156" textLength="64">40000</text><text x="1341" y="1156" textLength="64">50000</text></g>
            <text x="727" y="1187" font-size="21" textLength="192">GDP ($ per capita)</text><text x="725" y="80" font-size="25" textLength="196">critical per GDP</text><text transform="translate(51 648) rotate(-90)" font-size="21" textLength="73">Critical</text>
          </g>
        </svg>
      </section>
      <section class="card c-den">
        <h6 class="card-header">GDP per Density</h6>
        <svg class="chart" viewBox="261 2590 1063 468">
          <g class="mpl small" transform="translate(530 2615) scale(.33801 .33333)" font-size="20">
            <path class="grid" d="M190 83V1117M400 83V1117M610 83V1117M821 83V1117M1031 83V1117M1241 83V1117M1451 83V1117M126 246H1523M126 411H1523M126 577H1523M126 741H1523M126 906H1523M126 1071H1523"/>
            <path class="line" d="M189 908L196 1060 203 980 210 840 217 582 224 955 231 1040 238 1069 246 1045 252 918 259 1069H266L273 967 280 1045 287 1020 294 1052 301 862 308 947 315 873 322 965 329 1060 336 1013 343 998 350 986 357 980 363 932 365 1050 372 1025 379 990 386 910 393 1008 399 703 406 1048 413 1018 420 1032 427 1000 435 885 442 900 449 987 456 948 463 1069 469 1060 476 927 483 1062 490 1008 497 1015 504 965 511 1015 519 973 526 1005 533 1045 539 957 546 1020H553L560 1047 567 987 574 1035 582 938 589 972 596 940 603 872 609 975 616 910 623 937 630 1000 638 1069 645 1045 652 860 659 1060 666 833 673 1012 679 973 687 995 694 1069 701 1000 708 938 715 960 722 1010 729 950 736 890 743 1047 749 957 757 1043 764 1062 771 1025 778 880 785 1025 792 880 799 1045 806 910 813 893 820 1055 827 1038 834 990 841 1030 848 1000 855 1010 862 845 869 955 876 618 883 900 890 1053 897 1069 904 1038 911 1069H918L925 982 932 1022 939 977 947 1030 953 990 960 965 967 1037 974 998 981 1003 988 1050 995 1056 1002 1027 1009 1067 1016 726 1024 1070 1031 569 1037 953 1044 952 1051 912 1052 1002 1058 973 1065 1069 1072 1025 1079 1055 1086 1000 1093 942 1100 957 1107 1069 1114 690 1121 865 1128 905 1135 1010 1142 1048 1149 990 1156 1038 1163 992 1170 1015 1177 988 1184 1022 1191 127 1198 925 1205 1015 1212 1038 1220 1048 1227 923 1234 1069H1241L1247 817 1248 978 1255 993 1261 1018 1268 977 1275 1069 1283 800 1290 932 1296 925 1304 980 1311 1010 1317 1030 1324 1000H1331L1339 868 1345 993 1353 720 1360 600 1367 900 1374 962 1380 922 1388 997 1395 955 1402 1025 1409 958 1416 1030 1423 1069 1430 628 1437 1069 1444 1055 1451 1015 1458 955"/>
            <rect class="spine" x="126" y="83" width="1397" height="1034"/>
            <path class="tick" d="M118 246H126M118 411H126M118 577H126M118 741H126M118 906H126M118 1071H126M190 1117V1125M400 1117V1125M610 1117V1125M821 1117V1125M1031 1117V1125M1241 1117V1125M1451 1117V1125"/>
            <g><text x="66" y="254" textLength="43">0.25</text><text x="66" y="419" textLength="43">0.20</text><text x="66" y="584" textLength="43">0.15</text><text x="66" y="749" textLength="43">0.10</text><text x="66" y="914" textLength="43">0.05</text><text x="66" y="1079" textLength="43">0.00</text></g>
            <g text-anchor="middle"><text x="190" y="1147">0.0</text><text x="399" y="1147">135.7</text><text x="609" y="1147">2.6</text><text x="820" y="1147">3.4</text><text x="1031" y="1147">479.5</text><text x="1241" y="1147">66.9</text><text x="1451" y="1147">99.2</text></g>
            <text x="691" y="1178" font-size="21" textLength="266">Pop. Density (per sq. mi.)</text><text x="704" y="68" font-size="25" textLength="238">critical per Density</text><text transform="translate(51 637) rotate(-90)" font-size="21" textLength="73">Critical</text>
          </g>
        </svg>
      </section>
    </main>
    <footer class="footer"><span>Copyright © Your Website 2021</span></footer>
  </div>
</div>
<a class="scroll-top"><svg viewBox="0 0 320 512"><path d="M177 159.700l136 136c9.400 9.400 9.400 24.600 0 33.900l-22.600 22.600c-9.400 9.400-24.600 9.400-33.900 0L160 255.900l-96.400 96.400c-9.400 9.400-24.600 9.400-33.900 0L7 329.700c-9.400-9.400-9.400-24.600 0-33.900l136-136c9.400-9.500 24.600-9.500 34-.1z"/></svg></a>
</body>
</html>
```
FILE: styles.css
```css
* { box-sizing: border-box; }
body { margin: 0; font-family: "Nunito", "Open Sans", "Noto Sans CJK KR", sans-serif; font-size: 16px; color: #858796; background: #fff; }
.wrapper { display: flex; height: 3135px; }
.sidebar { width: 224px; flex: none; background: linear-gradient(180deg, #4e73df 10%, #224abe 100%); color: #fff; }
.brand { display: flex; height: 70px; align-items: center; padding: 0 0 2px 51px; }
.brand-icon { width: 32px; height: 33px; fill: #fff; transform: rotate(-15deg); }
.brand-text { margin-left: 16px; font-size: 16px; font-weight: 800; letter-spacing: .4px; line-height: 20px; }
.divider { margin: 0 16px; border: 0; border-top: 1px solid rgba(255,255,255,.15); }
.nav-link { display: flex; align-items: center; height: 56px; padding-left: 16px; font-size: 13.6px; color: rgba(255,255,255,.8); }
.nav-icon { width: 16px; height: 14px; fill: rgba(255,255,255,.3); margin-right: 9px; }
.nav-link.active { font-weight: 700; color: #fff; }
.nav-link.active .nav-icon { fill: #fff; }
.content { flex: 1; display: flex; flex-direction: column; min-width: 0; }
.main { background: #f8f9fc; height: 3059px; padding: 0 36px; }
h1 { margin: 0 0 0 -12px; padding-top: 47px; height: 105px; font-size: 28px; line-height: 34px; font-weight: 400; color: #5a5c69; }
.card { position: relative; background: #fff; border: 1px solid #e3e6f0; border-radius: 5.6px; box-shadow: 0 2.4px 28px rgba(58,59,69,.15); }
.card.tall { height: 694px; }
.c-time { height: 523px; }
.c-gdp { height: 521px; }
.c-den { height: 522px; }
.card-header { margin: 0; height: 52px; padding: 15.5px 20px; background: #f8f9fc; border-bottom: 1px solid #e3e6f0; border-radius: 4.6px 4.6px 0 0; font-size: 16px; line-height: 19.2px; font-weight: 700; color: #4e73df; }
.chart { display: block; width: 1063px; height: calc(100% - 52px); }
.map use, .map path { stroke-linejoin: round; }
#east { fill-rule: evenodd; clip-rule: evenodd; }
.map .low, .map .void, .map .c1, .map .c2, .map .c3, .map .c4, .map .c5, .map .c6, .map .russia, .map .india, .map .brazil, .map .top, .map .edge { stroke: #444; stroke-width: 3; }
.map .edge { fill: none; }
.map .void { fill: #e5ecf6; }
.map .low { fill: #fdebad; }
.map .c1 { fill: #fde6a9; }
.map .c2 { fill: #fce2a5; }
.map .c3 { fill: #fbdca0; }
.map .c4 { fill: #fad69b; }
.map .c5 { fill: #f9cd90; }
.map .c6 { fill: #f9c68a; }
.map .russia { fill: #f4a873; }
.map .india { fill: #e87455; }
.map .brazil { fill: #bc3459; }
.map .top { fill: #300f3a; }
.ptext { font-family: Verdana, "DejaVu Sans", sans-serif; font-size: 12px; fill: #2a3f5f; }
.mpl { font-family: "DejaVu Sans", sans-serif; fill: #2b2b2b; }
.series path { fill: none; stroke-width: 5; stroke-linejoin: round; stroke-linecap: square; opacity: .88; }
.spine { fill: none; stroke: #3c3c3c; stroke-width: 3; }
.small .spine { stroke: #6a6a6a; }
.tick { fill: none; stroke: #3c3c3c; stroke-width: 3; }
.grid { fill: none; stroke: #d0d0d0; stroke-width: 3; }
.line { fill: none; stroke: #1f77b4; stroke-width: 4; stroke-linejoin: round; opacity: .75; }
.dense { fill: none; stroke: #1f77b4; stroke-width: 5; }
.footer { height: 76px; background: #fff; display: flex; align-items: center; justify-content: center; font-size: 12.8px; line-height: 13px; }
.scroll-top { position: fixed; right: 16px; bottom: 16px; width: 44px; height: 44px; border-radius: 5.6px; background: rgba(90,92,105,.5); display: flex; align-items: center; justify-content: center; }
.scroll-top svg { width: 10px; height: 16px; fill: #fff; }
```
